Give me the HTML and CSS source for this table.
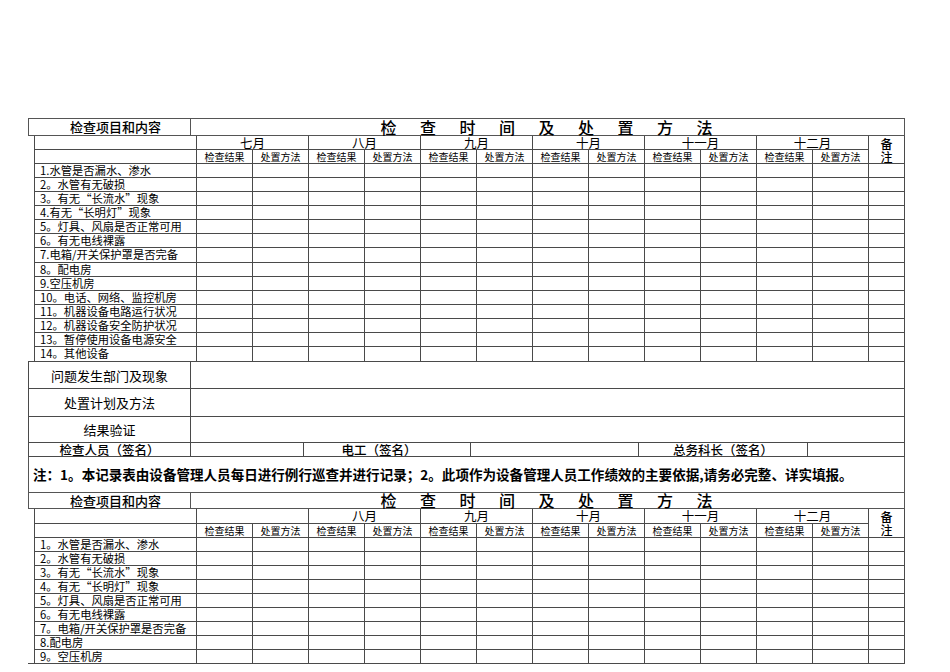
FILE: index.html
```html
<!DOCTYPE html>
<html lang="zh-CN">
<head>
<meta charset="utf-8">
<title>设备巡查记录表</title>
<link rel="stylesheet" href="styles.css">
</head>
<body>
<div class="page">
  <div class="hdr hdr1">
    <div class="hl">检查项目和内容</div>
    <div class="ht"><span>检</span><span>查</span><span>时</span><span>间</span><span>及</span><span>处</span><span>置</span><span>方</span><span>法</span></div>
  </div>
  <div class="grid g1">
    <div class="row"><span></span><b class="m">七月</b><b class="m">八月</b><b class="m">九月</b><b class="m">十月</b><b class="m">十一月</b><b class="m">十二月</b><b class="rm">备<br>注</b></div>
    <div class="row"><span></span><em>检查结果</em><em>处置方法</em><em>检查结果</em><em>处置方法</em><em>检查结果</em><em>处置方法</em><em>检查结果</em><em>处置方法</em><em>检查结果</em><em>处置方法</em><em>检查结果</em><em>处置方法</em></div>
    <div class="row"><span class="lbl">1.水管是否漏水、渗水</span><i></i><i></i><i></i><i></i><i></i><i></i><i></i><i></i><i></i><i></i><i></i><i></i><i></i></div>
    <div class="row"><span class="lbl">2。水管有无破损</span><i></i><i></i><i></i><i></i><i></i><i></i><i></i><i></i><i></i><i></i><i></i><i></i><i></i></div>
    <div class="row"><span class="lbl">3。有无“长流水”现象</span><i></i><i></i><i></i><i></i><i></i><i></i><i></i><i></i><i></i><i></i><i></i><i></i><i></i></div>
    <div class="row"><span class="lbl">4.有无“长明灯”现象</span><i></i><i></i><i></i><i></i><i></i><i></i><i></i><i></i><i></i><i></i><i></i><i></i><i></i></div>
    <div class="row"><span class="lbl">5。灯具、风扇是否正常可用</span><i></i><i></i><i></i><i></i><i></i><i></i><i></i><i></i><i></i><i></i><i></i><i></i><i></i></div>
    <div class="row"><span class="lbl">6。有无电线裸露</span><i></i><i></i><i></i><i></i><i></i><i></i><i></i><i></i><i></i><i></i><i></i><i></i><i></i></div>
    <div class="row"><span class="lbl">7.电箱/开关保护罩是否完备</span><i></i><i></i><i></i><i></i><i></i><i></i><i></i><i></i><i></i><i></i><i></i><i></i><i></i></div>
    <div class="row"><span class="lbl">8。配电房</span><i></i><i></i><i></i><i></i><i></i><i></i><i></i><i></i><i></i><i></i><i></i><i></i><i></i></div>
    <div class="row"><span class="lbl">9.空压机房</span><i></i><i></i><i></i><i></i><i></i><i></i><i></i><i></i><i></i><i></i><i></i><i></i><i></i></div>
    <div class="row"><span class="lbl">10。电话、网络、监控机房</span><i></i><i></i><i></i><i></i><i></i><i></i><i></i><i></i><i></i><i></i><i></i><i></i><i></i></div>
    <div class="row"><span class="lbl">11。机器设备电路运行状况</span><i></i><i></i><i></i><i></i><i></i><i></i><i></i><i></i><i></i><i></i><i></i><i></i><i></i></div>
    <div class="row"><span class="lbl">12。机器设备安全防护状况</span><i></i><i></i><i></i><i></i><i></i><i></i><i></i><i></i><i></i><i></i><i></i><i></i><i></i></div>
    <div class="row"><span class="lbl">13。暂停使用设备电源安全</span><i></i><i></i><i></i><i></i><i></i><i></i><i></i><i></i><i></i><i></i><i></i><i></i><i></i></div>
    <div class="row"><span class="lbl">14。其他设备</span><i></i><i></i><i></i><i></i><i></i><i></i><i></i><i></i><i></i><i></i><i></i><i></i><i></i></div>
  </div>
  <div class="low">
    <div class="ll">问题发生部门及现象</div><div class="lw"></div>
    <div class="ll">处置计划及方法</div><div class="lw"></div>
    <div class="ll">结果验证</div><div class="lw"></div>
    <div class="sg">检查人员（签名）</div><div></div><div class="sg sg2">电工（签名）</div><div></div><div class="sg">总务科长（签名）</div><div></div>
  </div>
  <div class="note">注：1。本记录表由设备管理人员每日进行例行巡查并进行记录；2。此项作为设备管理人员工作绩效的主要依据,请务必完整、详实填报。</div>
  <div class="hdr hdr2">
    <div class="hl">检查项目和内容</div>
    <div class="ht"><span>检</span><span>查</span><span>时</span><span>间</span><span>及</span><span>处</span><span>置</span><span>方</span><span>法</span></div>
  </div>
  <div class="grid g2">
    <div class="row"><span></span><b class="m"></b><b class="m">八月</b><b class="m">九月</b><b class="m">十月</b><b class="m">十一月</b><b class="m">十二月</b><b class="rm">备<br>注</b></div>
    <div class="row"><span></span><em>检查结果</em><em>处置方法</em><em>检查结果</em><em>处置方法</em><em>检查结果</em><em>处置方法</em><em>检查结果</em><em>处置方法</em><em>检查结果</em><em>处置方法</em><em>检查结果</em><em>处置方法</em></div>
    <div class="row"><span class="lbl">1。水管是否漏水、渗水</span><i></i><i></i><i></i><i></i><i></i><i></i><i></i><i></i><i></i><i></i><i></i><i></i><i></i></div>
    <div class="row"><span class="lbl">2。水管有无破损</span><i></i><i></i><i></i><i></i><i></i><i></i><i></i><i></i><i></i><i></i><i></i><i></i><i></i></div>
    <div class="row"><span class="lbl">3。有无“长流水”现象</span><i></i><i></i><i></i><i></i><i></i><i></i><i></i><i></i><i></i><i></i><i></i><i></i><i></i></div>
    <div class="row"><span class="lbl">4。有无“长明灯”现象</span><i></i><i></i><i></i><i></i><i></i><i></i><i></i><i></i><i></i><i></i><i></i><i></i><i></i></div>
    <div class="row"><span class="lbl">5。灯具、风扇是否正常可用</span><i></i><i></i><i></i><i></i><i></i><i></i><i></i><i></i><i></i><i></i><i></i><i></i><i></i></div>
    <div class="row"><span class="lbl">6。有无电线裸露</span><i></i><i></i><i></i><i></i><i></i><i></i><i></i><i></i><i></i><i></i><i></i><i></i><i></i></div>
    <div class="row"><span class="lbl">7。电箱/开关保护罩是否完备</span><i></i><i></i><i></i><i></i><i></i><i></i><i></i><i></i><i></i><i></i><i></i><i></i><i></i></div>
    <div class="row"><span class="lbl">8.配电房</span><i></i><i></i><i></i><i></i><i></i><i></i><i></i><i></i><i></i><i></i><i></i><i></i><i></i></div>
    <div class="row"><span class="lbl">9。空压机房</span><i></i><i></i><i></i><i></i><i></i><i></i><i></i><i></i><i></i><i></i><i></i><i></i><i></i></div>
  </div>
  <div class="endline"></div>
</div>
</body>
</html>
```
FILE: styles.css
```css
html, body {
  margin: 0;
  padding: 0;
  background: #fff;
}
body {
  font-family: "Noto Sans CJK SC", "Noto Sans", sans-serif;
  color: #000;
}
.page {
  padding: 118px 0 0 28px;
  width: 877px;
}

/* header bar */
.hdr {
  display: grid;
  grid-template-columns: 161px 713px;
  gap: 1px;
  padding: 1px;
  background: #555;
}
.hdr > div {
  background: #fff;
  height: 16px;
}
.hdr2 > div {
  height: 15px;
}
.hl {
  font-size: 13px;
  line-height: 16px;
  text-align: center;
  padding-left: 12px;
  box-sizing: border-box;
  font-weight: 500;
}
.ht {
  display: flex;
  justify-content: center;
  align-items: flex-end;
  gap: 23.5px;
  font-size: 16px;
  line-height: 16px;
  font-weight: 500;
  padding-right: 2px;
}

/* check grid */
.grid {
  margin-left: 6px;
  display: grid;
  grid-template-columns: 161px repeat(12, 55px) 35px;
  gap: 1px;
  padding: 0 1px;
  background: #4a4a4a;
}
.g1 {
  grid-template-rows: 13px 13px repeat(6, 13px) 14px repeat(6, 13px) 14px;
}
.g2 {
  grid-template-rows: 14px 13px repeat(9, 13px);
}
.row {
  display: contents;
}
.grid span, .grid i, .grid b, .grid em {
  background: #fff;
  display: block;
  font-style: normal;
  font-weight: normal;
  white-space: nowrap;
}
.grid .m {
  grid-column: span 2;
  font-size: 12.5px;
  line-height: 13px;
  text-align: center;
}
.g2 .m {
  line-height: 14px;
}
.grid .rm {
  grid-row: span 2;
  font-size: 12px;
  line-height: 13px;
  text-align: center;
  padding-top: 1px;
  font-weight: 500;
}
.grid em {
  font-size: 10px;
  line-height: 13px;
  text-align: center;
}
.grid .lbl {
  font-size: 11.3px;
  line-height: 13px;
  padding-left: 5px;
}

/* lower block */
.low {
  display: grid;
  grid-template-columns: 161px 112px 166px 167px 168px 96px;
  grid-template-rows: 26px 27px 25px 13px;
  gap: 1px;
  padding: 1px;
  background: #4a4a4a;
}
.low > div {
  background: #fff;
}
.ll {
  font-size: 13px;
  text-align: center;
  display: flex;
  align-items: center;
  justify-content: center;
}
.lw {
  grid-column: 2 / 7;
}
.sg {
  font-size: 12.5px;
  line-height: 13px;
  text-align: center;
  white-space: nowrap;
  font-weight: 500;
}
.sg2 {
  padding-right: 16px;
}

/* note */
.note {
  height: 35px;
  border-left: 1px solid #555;
  border-right: 1px solid #555;
  box-sizing: content-box;
  width: 875px;
  font-size: 13.55px;
  font-weight: bold;
  line-height: 35px;
  text-indent: 4px;
  white-space: nowrap;
}

.endline {
  height: 1px;
  background: #4a4a4a;
}
```
